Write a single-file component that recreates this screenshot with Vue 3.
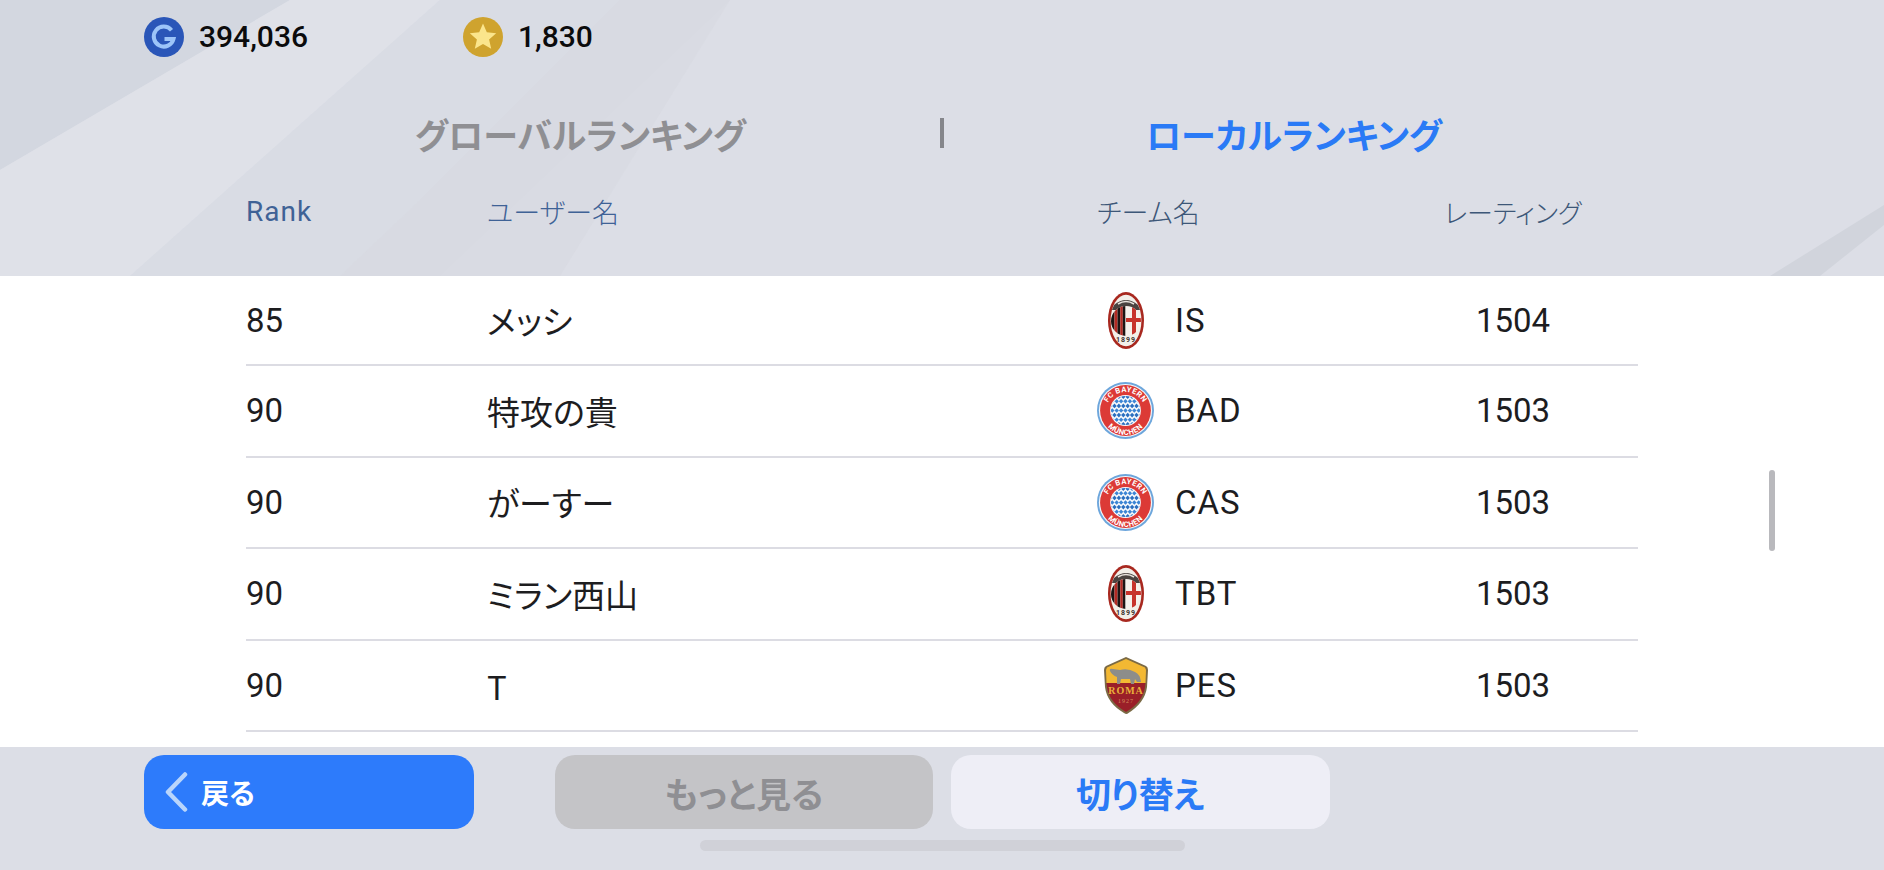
<script setup>
const rows = [
  { rank: '85', name: 'メッシ', logo: 'milan', team: 'IS', rating: '1504' },
  { rank: '90', name: '特攻の貴', logo: 'bayern', team: 'BAD', rating: '1503' },
  { rank: '90', name: 'がーすー', logo: 'bayern', team: 'CAS', rating: '1503' },
  { rank: '90', name: 'ミラン西山', logo: 'milan', team: 'TBT', rating: '1503' },
  { rank: '90', name: 'T', logo: 'roma', team: 'PES', rating: '1503' },
]
const diamonds = []
for (let r = -4; r <= 4; r++) {
  for (let c = -4; c <= 4; c++) {
    const x = 28.5 + c * 4.4 + (r % 2 ? 2.2 : 0)
    const y = 28.5 + r * 4.6
    diamonds.push({ id: r + '_' + c, points: `${x},${y - 2.3} ${x + 2.2},${y} ${x},${y + 2.3} ${x - 2.2},${y}`, fill: (r + 8) % 2 ? '#2a6fc0' : '#3c85d4' })
  }
}
</script>

<template>
  <div class="screen">
    <svg class="backdrop" viewBox="0 0 1884 870" preserveAspectRatio="none" aria-hidden="true">
      <polygon points="0,0 290,0 0,170" fill="#d3d7e0" />
      <polygon points="290,0 440,0 130,276 0,276 0,170" fill="#dfe1e8" />
      <polygon points="440,0 730,0 440,276 130,276" fill="#d9dce4" />
      <polygon points="730,0 620,0 420,200 340,276 560,276" fill="#d7d9e0" opacity="0.55" />
      <polygon points="1884,205 1884,225 1820,276 1770,276" fill="#d1d4dc" />
    </svg>

    <header class="top">
      <div class="wallet">
        <div class="balance gp">
          <svg class="coin" viewBox="0 0 40 40">
            <circle cx="20" cy="20" r="20" fill="#2a56b8" />
            <path d="M27.5 13.2A10 10 0 1 0 29.5 22H20.5" fill="none" stroke="#9cc4f8" stroke-width="4" />
          </svg>
          <span>394,036</span>
        </div>
        <div class="balance star">
          <svg class="coin" viewBox="0 0 40 40">
            <circle cx="20" cy="20" r="20" fill="#cfa32e" />
            <polygon points="20,6.5 23.8,15.3 33.2,16.2 26.1,22.5 28.2,31.8 20,26.9 11.8,31.8 13.9,22.5 6.8,16.2 16.2,15.3" fill="#fbe58c" />
          </svg>
          <span>1,830</span>
        </div>
      </div>
      <nav class="tabs">
        <span class="tab idle">グローバルランキング</span>
        <i class="divider"></i>
        <span class="tab active">ローカルランキング</span>
      </nav>
      <div class="grid head">
        <span class="h-rank">Rank</span>
        <span>ユーザー名</span>
        <span class="h-team">チーム名</span>
        <span class="h-rate">レーティング</span>
      </div>
    </header>

    <main class="list">
      <div v-for="(row, i) in rows" :key="i" class="grid row">
        <span>{{ row.rank }}</span>
        <span class="name">{{ row.name }}</span>
        <span class="team">
          <span class="logo">
            <svg v-if="row.logo === 'milan'" width="36" height="57" viewBox="0 0 36 57">
              <ellipse cx="18" cy="28.5" rx="18" ry="28.5" fill="#a8281f" />
              <ellipse cx="18" cy="28.5" rx="15.4" ry="25.8" fill="#f2efe9" />
              <path d="M6 13Q18 3 30 13L32 18H4Z" fill="#4a4340" />
              <path d="M10 12Q18 7 26 12" fill="none" stroke="#e8e2dc" stroke-width="1.5" />
              <clipPath id="milan-core"><ellipse cx="18" cy="29" rx="15" ry="15" /></clipPath>
              <g clip-path="url(#milan-core)">
                <rect x="2" y="14" width="32" height="30" fill="#f5f1ec" />
                <rect x="3" y="14" width="3.5" height="30" fill="#1c1514" />
                <rect x="6.5" y="14" width="3" height="30" fill="#b32a24" />
                <rect x="9.5" y="14" width="2.8" height="30" fill="#1c1514" />
                <rect x="12.3" y="14" width="2.5" height="30" fill="#b32a24" />
                <rect x="14.8" y="14" width="2.5" height="30" fill="#1c1514" />
                <rect x="24" y="14" width="4" height="30" fill="#c7332c" />
                <rect x="18" y="26" width="16" height="4" fill="#c7332c" />
              </g>
              <text x="18" y="50" text-anchor="middle" class="milan-year">1899</text>
            </svg>
            <svg v-else-if="row.logo === 'bayern'" width="57" height="57" viewBox="0 0 57 57">
              <circle cx="28.5" cy="28.5" r="28.5" fill="#6da6dc" />
              <circle cx="28.5" cy="28.5" r="26.6" fill="#f4f6f9" />
              <circle cx="28.5" cy="28.5" r="25.4" fill="#dc3a36" />
              <circle cx="28.5" cy="28.5" r="15.4" fill="#f7f9fc" />
              <clipPath :id="'b-core' + i"><circle cx="28.5" cy="28.5" r="14.6" /></clipPath>
              <g :clip-path="'url(#b-core' + i + ')'">
                <polygon v-for="d in diamonds" :key="d.id" :points="d.points" :fill="d.fill" />
              </g>
              <path :id="'b-top' + i" d="M8.5 30A20 20 0 0 1 48.5 30" fill="none" />
              <path :id="'b-bot' + i" d="M5.5 30A23 23 0 0 0 51.5 30" fill="none" />
              <text class="bayern-text"><textPath :href="'#b-top' + i" startOffset="50%" text-anchor="middle">FC BAYERN</textPath></text>
              <text class="bayern-text"><textPath :href="'#b-bot' + i" startOffset="50%" text-anchor="middle">MÜNCHEN</textPath></text>
            </svg>
            <svg v-else width="44" height="57" viewBox="0 0 44 57">
              <path d="M22 0L42 9Q44 10 44 13L43 30Q41 46 23 57Q21 57 20 56Q3 46 1 30L0 13Q0 10 2 9Z" fill="#7b6a45" />
              <path d="M22 2L41 10.5L42 13L41.5 26H2.5L2 13L3 10.5Z" fill="#f3b833" />
              <path d="M2.5 26H41.5L41 30Q39 45 22 55Q5 45 3 30Z" fill="#9a1f28" />
              <path d="M6 14Q5 11 9 12L16 13Q24 11 31 15Q36 17 37 25H33L31 22L30 27H27L26 22H17L16 27H13L13 20Q8 18 6 14Z" fill="#8d8d8a" />
              <text x="22" y="37" text-anchor="middle" class="roma-name">ROMA</text>
              <text x="22" y="46" text-anchor="middle" class="roma-year">1927</text>
            </svg>
          </span>
          <span>{{ row.team }}</span>
        </span>
        <span class="rating">{{ row.rating }}</span>
      </div>
      <svg class="scrollbar" width="6" height="81" viewBox="0 0 6 81" aria-hidden="true">
        <rect width="6" height="81" rx="3" fill="#b9b9bd" />
      </svg>
    </main>

    <footer class="bottom">
      <div class="buttons">
        <button class="btn back">
          <svg width="24" height="40" viewBox="0 0 24 40">
            <path d="M21 2.5L4 20L21 37.5" fill="none" stroke="#b9d5fb" stroke-width="4.5" stroke-linecap="round" stroke-linejoin="round" />
          </svg>
          <span>戻る</span>
        </button>
        <button class="btn more">もっと見る</button>
        <button class="btn swap">切り替え</button>
      </div>
      <div class="home"></div>
    </footer>
  </div>
</template>

<style>
html, body { margin: 0; background: #dcdee6; }
</style>

<style scoped>
.screen {
  position: relative;
  width: 1884px;
  height: 870px;
  overflow: hidden;
  background: #dcdee6;
  font-family: "Roboto", "Noto Sans CJK JP", sans-serif;
  display: flex;
  flex-direction: column;
}
.backdrop { position: absolute; inset: 0; width: 1884px; height: 870px; }
.top { position: relative; height: 276px; box-sizing: border-box; padding-top: 16px; }
.wallet { display: flex; padding-left: 144px; height: 41px; }
.balance { display: flex; align-items: center; font-size: 30px; font-weight: 500; color: #0b0b0c; gap: 15px; }
.balance.gp { width: 319px; }
.coin { width: 40px; height: 40px; flex: none; }
.tabs {
  display: flex;
  align-items: center;
  margin-top: 55px;
  height: 42px;
  font-family: "Noto Sans CJK JP", sans-serif;
  font-size: 35px;
  font-weight: 700;
  font-feature-settings: "palt";
}
.tab.idle { margin-left: 415px; width: 525px; color: #8f8f93; }
.divider { width: 4px; height: 30px; background: #85868b; }
.tab.active { margin-left: 202px; color: #2a7af6; }
.grid {
  display: grid;
  grid-template-columns: 241px 610px 291px 250px;
  margin-left: 246px;
  width: 1392px;
  align-items: center;
}
.head {
  margin-top: 37px;
  height: 40px;
  font-family: "Noto Sans CJK JP", sans-serif;
  font-size: 27px;
  font-weight: 300;
  color: #3f6296;
  font-feature-settings: "palt";
}
.h-rank { font-family: "Roboto", sans-serif; letter-spacing: 1px; font-size: 28px; font-weight: 400; }
.h-team { color: #3d5778; }
.h-rate { text-align: center; color: #3d5778; font-size: 26px; }
.list { position: relative; height: 471px; background: #fff; }
.row {
  box-sizing: border-box;
  height: 91.6px;
  border-bottom: 2px solid #dcdce3;
  font-size: 33px;
  font-weight: 400;
  color: #1d1d1f;
}
.row:first-child { height: 90px; }
.name { font-family: "Noto Sans CJK JP", sans-serif; font-weight: 400; font-size: 33px; font-feature-settings: "palt"; }
.team { display: flex; align-items: center; gap: 21px; letter-spacing: 1px; }
.logo { width: 57px; height: 57px; display: flex; justify-content: center; flex: none; }
.rating { text-align: center; }
.milan-year { font-family: "Roboto", sans-serif; font-size: 7px; fill: #3a302d; font-weight: 700; }
.bayern-text { font-family: "Roboto", sans-serif; font-size: 7.6px; font-weight: 700; fill: #fff; letter-spacing: 0.4px; }
.roma-name { font-family: "Liberation Serif", serif; font-size: 10px; font-weight: 700; fill: #e9b13b; }
.roma-year { font-family: "Liberation Serif", serif; font-size: 6px; fill: #d48c5a; }
.scrollbar { position: absolute; left: 1769px; top: 194px; }
.bottom { position: relative; flex: 1; }
.buttons { display: flex; padding: 8px 0 0 144px; }
.btn {
  height: 74px;
  border: 0;
  border-radius: 20px;
  font-family: "Noto Sans CJK JP", sans-serif;
  font-weight: 700;
  font-feature-settings: "palt";
  font-size: 35px;
  padding: 0;
}
.back {
  width: 330px;
  background: #2d7bfb;
  color: #fff;
  font-size: 28px;
  display: flex;
  align-items: center;
  gap: 13px;
  padding-left: 20px;
  box-sizing: border-box;
}
.more { width: 378px; margin-left: 81px; background: #c4c4c7; color: #8f8f93; }
.swap { width: 379px; margin-left: 18px; background: #eeeef6; color: #2a7af6; }
.home { width: 485px; height: 11px; border-radius: 6px; background: #d0d1d8; margin: 11px 0 0 700px; }
</style>
